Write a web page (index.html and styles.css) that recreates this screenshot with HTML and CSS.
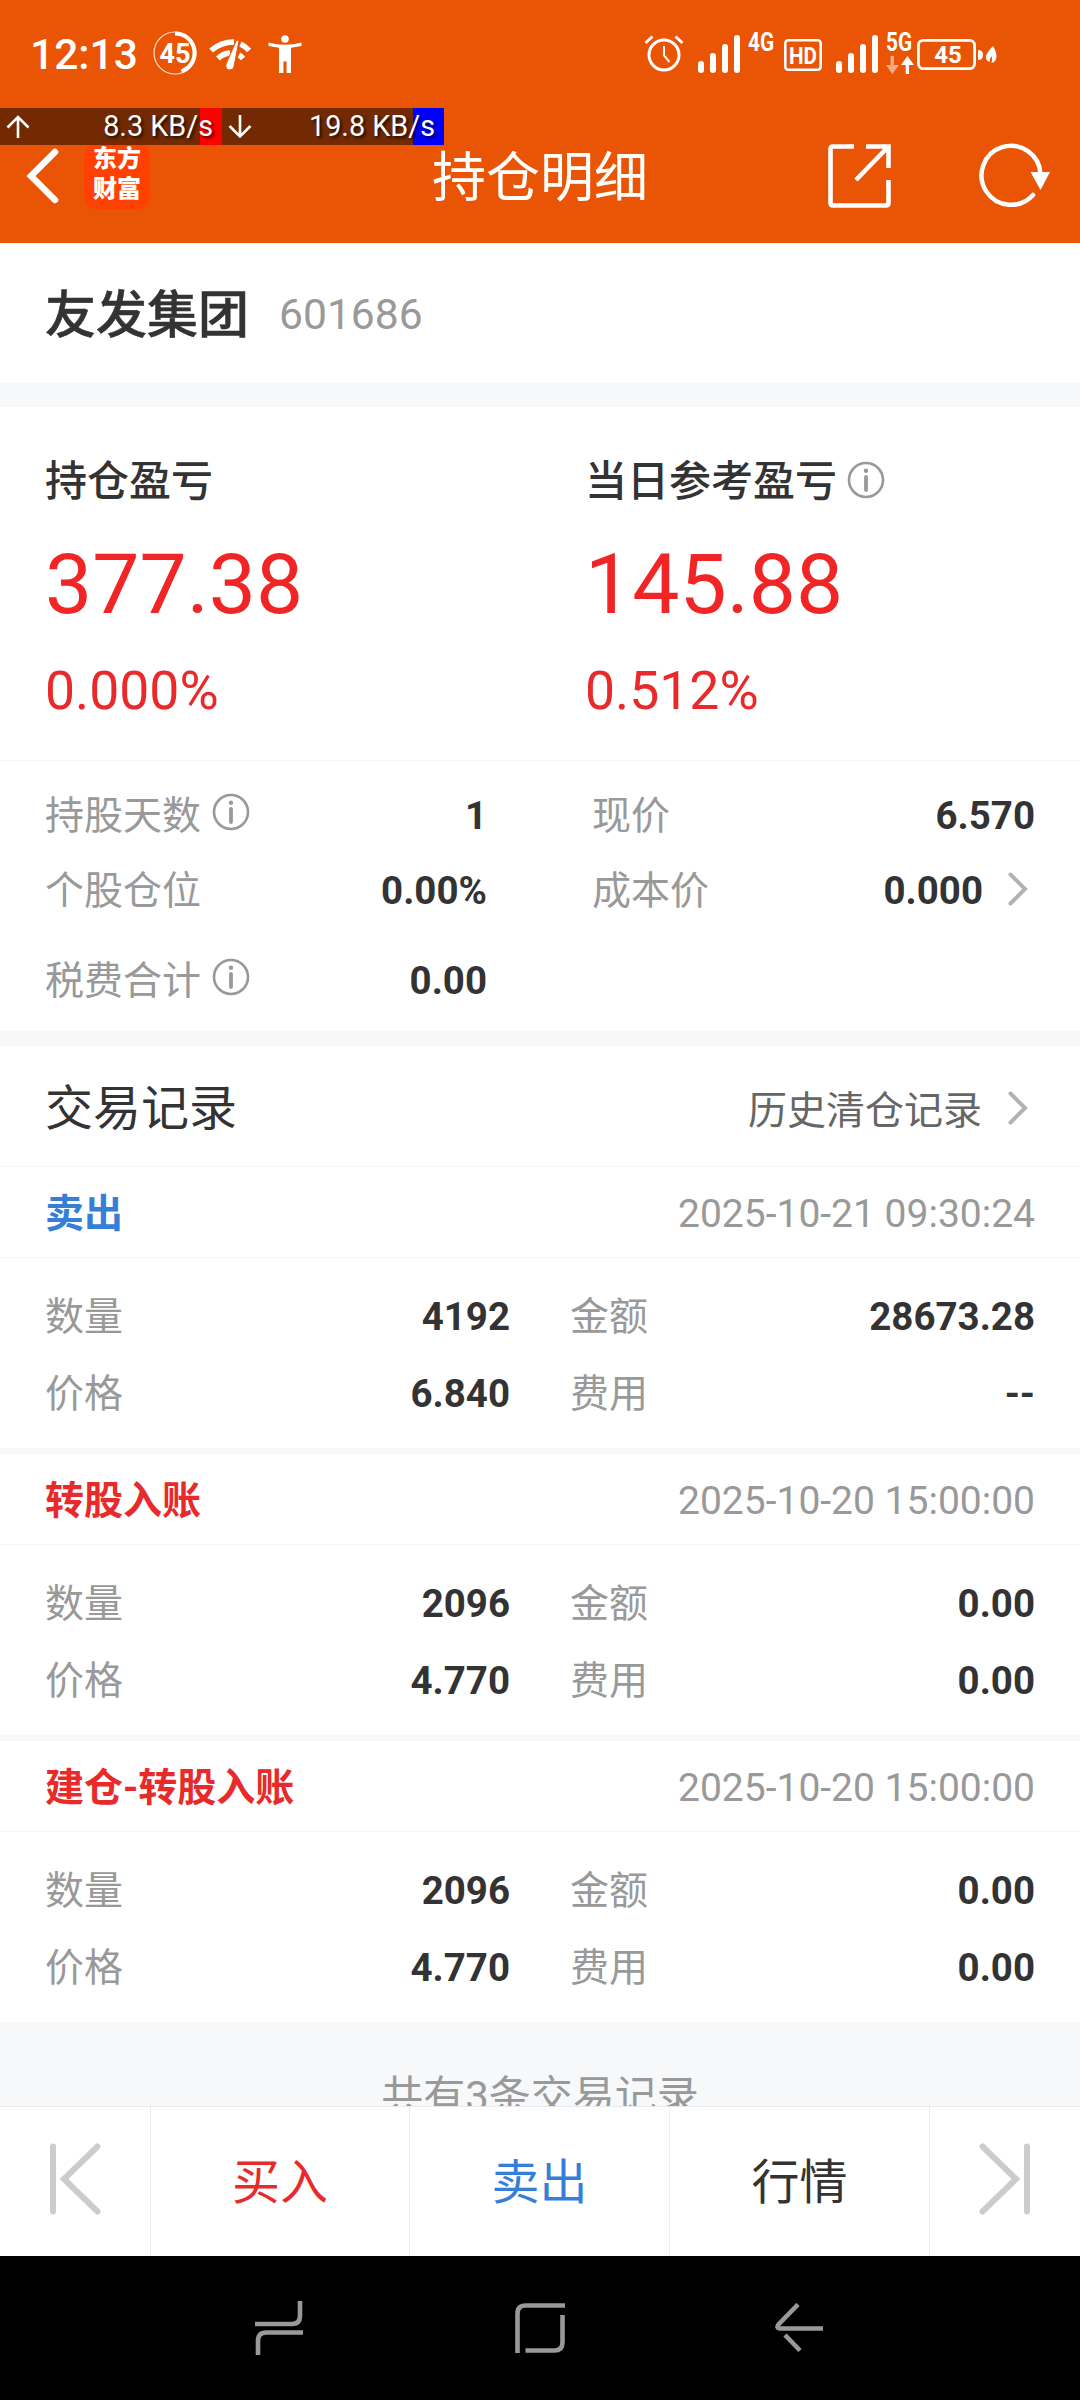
FILE: index.html
```html
<!DOCTYPE html>
<html lang="zh-CN">
<head>
    <meta charset="UTF-8">
    <meta name="viewport" content="width=device-width, initial-scale=1.0">
    <title>持仓明细</title>
    <link rel="stylesheet" href="styles.css">
</head>
<body>
<svg class="defs" width="0" height="0">
    <symbol id="info" viewBox="0 0 38 38">
        <circle cx="19" cy="19" r="17" fill="none" stroke="#999" stroke-width="2.6"/>
        <circle cx="19" cy="9.8" r="2.2" fill="#999"/>
        <path d="M19 16v13" stroke="#999" stroke-width="3.8" stroke-linecap="round"/>
    </symbol>
    <symbol id="chevron" viewBox="0 0 20 34">
        <path d="M2.5 2.5L17 17L2.5 31.5" fill="none" stroke="#b2b2b2" stroke-width="4" stroke-linecap="round"/>
    </symbol>
    <symbol id="signal" viewBox="0 0 42 38">
        <rect x="0" y="26" width="6" height="12" rx="3"/>
        <rect x="12" y="18" width="6" height="20" rx="3"/>
        <rect x="24" y="9" width="6" height="29" rx="3"/>
        <rect x="36" y="0" width="6" height="38" rx="3"/>
    </symbol>
</svg>
<div class="phone">
    <header class="header">
        <div class="status-bar">
            <span class="clock">12:13</span>
            <svg class="ring-icon" width="44" height="44" viewBox="0 0 44 44">
                <circle cx="22" cy="22" r="21" fill="none" stroke="#fff" stroke-opacity=".8" stroke-width="1.2"/>
                <path d="M22 2.5A19.5 19.5 0 0 1 28.5 40.4" fill="none" stroke="#fff" stroke-width="4"/>
                <text x="22" y="31.5" text-anchor="middle">45</text>
            </svg>
            <svg class="wifi-icon" width="42" height="32" viewBox="0 0 42 32">
                <path d="M2 11.5Q12 3 25 3M31.5 5Q36 7 40 11.5" fill="none" stroke="#fff" stroke-width="5.5"/>
                <path d="M9 19.5Q14 14.5 21 14M30 16Q32 17 34 19.5" fill="none" stroke="#fff" stroke-width="5.5"/>
                <path d="M27.5 1L30 1.5L25 27.5Q24.5 31 20.5 31Q16 30.5 17 25Z" fill="#fff" stroke="#e95504" stroke-width="1"/>
            </svg>
            <svg class="person-icon" width="34" height="38" viewBox="0 0 34 38" fill="#fff">
                <circle cx="17" cy="4" r="3.8"/>
                <path d="M.5 7.5Q17 12 33.5 7.5V11L23 12.8V38H18.6V26.5H15.4V38H11V12.8L.5 11Z"/>
            </svg>
            <span class="spacer"></span>
            <svg class="alarm-icon" width="40" height="38" viewBox="0 0 40 38" fill="none" stroke="#fff">
                <circle cx="20" cy="21" r="15" stroke-width="3"/>
                <path d="M20 12V21.5L25.5 28" stroke-width="2"/>
                <path d="M1.5 9L8.5 2.5M31.5 2.5L38.5 9" stroke-width="3"/>
            </svg>
            <svg class="signal" width="42" height="38" fill="#fff"><use href="#signal"/></svg>
            <span class="net-type">4G</span>
            <svg class="hd-icon" width="38" height="32" viewBox="0 0 38 32">
                <rect x="1.3" y="1.3" width="35.4" height="29.4" rx="3" fill="none" stroke="#fff" stroke-width="2.6"/>
                <text x="19" y="24.5" text-anchor="middle" textLength="28" lengthAdjust="spacingAndGlyphs">HD</text>
            </svg>
            <svg class="signal" width="42" height="38" fill="#fff"><use href="#signal"/></svg>
            <div class="net-5g">
                <span class="net-type">5G</span>
                <svg width="28" height="18" viewBox="0 0 28 18" fill="#fff">
                    <path d="M4.5 0H8V9H13L6.3 18L0 9H4.5Z" opacity=".5"/>
                    <path d="M19.7 18H23V9H28L21.5 0L15 9H19.7Z"/>
                </svg>
            </div>
            <svg class="battery" width="80" height="32" viewBox="0 0 80 32">
                <rect x="1.4" y="1.4" width="56.2" height="28.2" rx="5" fill="none" stroke="#fff" stroke-width="2.8"/>
                <path d="M61 11Q66 11 66 16T61 21Z" fill="#fff"/>
                <path d="M76 7Q79.5 13 79.5 17.5Q79 23 74.5 24Q76 20 74.5 17Q72.5 20 72.5 23Q68.5 21.5 69 17Q70.5 12.5 76 7Z" fill="#fff"/>
                <text x="31" y="23.5" text-anchor="middle">45</text>
            </svg>
        </div>
        <div class="title-bar">
            <svg class="back" width="34" height="56" viewBox="0 0 34 56">
                <path d="M29 4L5 28L29 52" fill="none" stroke="#fff" stroke-width="6.5" stroke-linecap="round"/>
            </svg>
            <div class="logo"><span>东方</span><span>财富</span></div>
            <h1>持仓明细</h1>
            <svg class="share" width="64" height="64" viewBox="0 0 64 64">
                <path d="M26 2.5H5Q2.5 2.5 2.5 5V59Q2.5 61.5 5 61.5H58Q60.5 61.5 60.5 59V36M38 2.5H60.5V24M60 3L28 36" fill="none" stroke="#fff" stroke-width="4.6"/>
            </svg>
            <svg class="refresh" width="72" height="66" viewBox="0 0 72 66">
                <path d="M54 53A29.5 29.5 0 1 1 61.5 32" fill="none" stroke="#fff" stroke-width="4.5" stroke-linecap="round"/>
                <path d="M51.5 30H71L61.5 48Z" fill="#fff"/>
            </svg>
        </div>
        <!-- floating network speed overlay -->
        <div class="net-speed">
            <div class="speed up">
                <svg width="24" height="24" viewBox="0 0 24 24"><path d="M12 23V2M1.5 12.5L12 2L22.5 12.5"/></svg>
                <span>8.3 KB/s</span>
            </div>
            <div class="speed down">
                <svg width="24" height="24" viewBox="0 0 24 24"><path d="M12 0V21M1.5 11L12 21.5L22.5 11"/></svg>
                <span>19.8 KB/s</span>
            </div>
        </div>
    </header>

    <main class="content">
        <section class="stock">
            <h2>友发集团</h2>
            <span class="code">601686</span>
        </section>

        <section class="profit">
            <div class="profit-col">
                <div class="profit-label">持仓盈亏</div>
                <div class="amount">377.38</div>
                <div class="percent">0.000%</div>
            </div>
            <div class="profit-col">
                <div class="profit-label">当日参考盈亏<svg class="info"><use href="#info"/></svg></div>
                <div class="amount">145.88</div>
                <div class="percent">0.512%</div>
            </div>
        </section>

        <section class="detail">
            <div class="row"><span>持股天数<svg class="info"><use href="#info"/></svg></span><b>1</b></div>
            <div class="row"><span>现价</span><b>6.570</b></div>
            <div class="row"><span>个股仓位</span><b>0.00%</b></div>
            <div class="row"><span>成本价</span><b>0.000<svg class="chevron"><use href="#chevron"/></svg></b></div>
            <div class="row last"><span>税费合计<svg class="info"><use href="#info"/></svg></span><b>0.00</b></div>
        </section>

        <section class="records-head">
            <h3>交易记录</h3>
            <span class="history">历史清仓记录<svg class="chevron"><use href="#chevron"/></svg></span>
        </section>

        <section class="record">
            <div class="record-head"><strong class="sell">卖出</strong><time>2025-10-21 09:30:24</time></div>
            <div class="record-body">
                <div class="row"><span>数量</span><b>4192</b></div>
                <div class="row"><span>金额</span><b>28673.28</b></div>
                <div class="row"><span>价格</span><b>6.840</b></div>
                <div class="row"><span>费用</span><b>--</b></div>
            </div>
        </section>
        <section class="record">
            <div class="record-head"><strong class="buy">转股入账</strong><time>2025-10-20 15:00:00</time></div>
            <div class="record-body">
                <div class="row"><span>数量</span><b>2096</b></div>
                <div class="row"><span>金额</span><b>0.00</b></div>
                <div class="row"><span>价格</span><b>4.770</b></div>
                <div class="row"><span>费用</span><b>0.00</b></div>
            </div>
        </section>
        <section class="record">
            <div class="record-head"><strong class="buy">建仓-转股入账</strong><time>2025-10-20 15:00:00</time></div>
            <div class="record-body">
                <div class="row"><span>数量</span><b>2096</b></div>
                <div class="row"><span>金额</span><b>0.00</b></div>
                <div class="row"><span>价格</span><b>4.770</b></div>
                <div class="row"><span>费用</span><b>0.00</b></div>
            </div>
        </section>
        <p class="total">共有3条交易记录</p>
    </main>

    <footer class="actions">
        <div class="prev">
            <svg width="52" height="72" viewBox="0 0 52 72"><path d="M4 3.5V68.5M48.5 3.5L15 36L48.5 68.5"/></svg>
        </div>
        <div class="action buy">买入</div>
        <div class="action sell">卖出</div>
        <div class="action">行情</div>
        <div class="next">
            <svg width="52" height="72" viewBox="0 0 52 72"><path d="M48 3.5V68.5M3.5 3.5L37 36L3.5 68.5"/></svg>
        </div>
    </footer>

    <nav class="nav-bar">
        <svg width="48" height="54" viewBox="0 0 48 54"><path d="M45 0V15Q45 23 37 23H0M48 31.500H11Q3 31.500 3 40V54"/></svg>
        <svg width="50" height="50" viewBox="0 0 50 50"><path d="M2.5 50V10.500Q2.500 2.500 10.500 2.500H50M47.500 12V39.500Q47.500 47.500 39.500 47.500H10.500"/></svg>
        <svg class="nav-back" width="48" height="50" viewBox="0 0 48 50"><path d="M48 25.500H4.500Q1 25 3.500 21.500L23 1.500M10 32L25 47.500"/></svg>
    </nav>
</div>
</body>
</html>
```
FILE: styles.css
```css
* {
    box-sizing: border-box;
}
body {
    margin: 0;
    font-family: Roboto, "Noto Sans CJK SC", sans-serif;
    color: #333;
    background: #fff;
}
h1, h2, h3, p {
    margin: 0;
    font-weight: 400;
}
svg {
    display: block;
    flex: none;
}
.defs {
    position: absolute;
}
.phone {
    width: 1080px;
    height: 2400px;
    display: flex;
    flex-direction: column;
    overflow: hidden;
}

/* header */
.header {
    position: relative;
    height: 243px;
    background: #e95504;
    color: #fff;
}
.status-bar {
    display: flex;
    align-items: flex-start;
    height: 108px;
    padding: 31px 83px 0 30px;
}
.status-bar text {
    fill: #fff;
    font-weight: 700;
    font-size: 24px;
}
.clock {
    width: 123px;
    font-size: 42.5px;
    line-height: 48px;
    font-weight: 500;
}
.ring-icon {
    overflow: visible;
}
.status-bar .ring-icon text {
    font-size: 27px;
}
.wifi-icon {
    margin: 8px 0 0 12px;
}
.person-icon {
    margin: 4px 0 0 17px;
}
.spacer {
    flex: 1;
}
.alarm-icon {
    margin-top: 3px;
}
.signal {
    margin: 4px 0 0 14px;
}
.net-type {
    display: block;
    width: 26px;
    margin-left: 8px;
    font-size: 25px;
    line-height: 24px;
    font-weight: 700;
    transform: scaleX(.83);
    transform-origin: 0 0;
}
.hd-icon {
    margin: 8px 0 0 10px;
}
.net-5g {
    width: 39px;
}
.net-5g svg {
    margin: 1px 0 0 8px;
}
.battery {
    margin: 8px 0 0 0;
}
.title-bar {
    display: flex;
    align-items: flex-start;
    height: 135px;
    padding: 35px 0 0 26px;
}
.back {
    margin-top: 5px;
}
.logo {
    display: flex;
    flex-direction: column;
    width: 66px;
    height: 66px;
    margin-left: 24px;
    padding-top: 1px;
    border-radius: 13px;
    background: #ff4000;
    font-size: 24px;
    line-height: 30px;
    font-weight: 900;
    text-align: center;
}
.title-bar h1 {
    width: 216px;
    margin-left: 282px;
    padding-top: 3px;
    font-size: 54px;
    line-height: 66px;
    white-space: nowrap;
}
.share {
    margin: 1px 0 0 180px;
}
.refresh {
    margin: -1px 0 0 87px;
}
.net-speed {
    position: absolute;
    left: 0;
    top: 108px;
    display: flex;
    height: 37px;
}
.speed {
    display: flex;
    align-items: center;
    justify-content: space-between;
    width: 222px;
    padding: 0 9px 0 6px;
    font-size: 28.8px;
    line-height: 37px;
    text-shadow: 2px 2px 3px rgba(0, 0, 0, .7);
}
.speed svg {
    fill: none;
    stroke: #fff;
    stroke-width: 2.6;
}
.up {
    background: linear-gradient(90deg, #732a02 200px, #f00 200px);
}
.down {
    background: linear-gradient(90deg, #732a02 191px, #00f 191px);
}

/* content */
.content {
    height: 1863px;
    overflow: hidden;
    background: #f6f8fa;
}
.stock, .profit, .detail, .records-head, .record {
    background: #fff;
}
.stock {
    display: flex;
    align-items: center;
    height: 140px;
    padding-left: 45px;
}
.stock h2 {
    padding-bottom: 5px;
    font-size: 51px;
    font-weight: 500;
    -webkit-text-stroke: .5px #333;
}
.code {
    margin: 1px 0 0 30px;
    font-size: 42.6px;
    color: #999;
}
.profit {
    display: flex;
    height: 354px;
    margin-top: 24px;
    border-bottom: 1px solid #f4f5f7;
}
.profit-col {
    width: 541px;
    padding: 45px 0 0 45px;
}
.profit-label {
    display: flex;
    align-items: center;
    font-size: 42px;
    line-height: 60px;
    font-weight: 500;
}
.info {
    width: 38px;
    height: 38px;
    margin-left: 11px;
}
.profit-label .info {
    margin: -4px 0 0 10px;
}
.amount {
    margin-top: 24px;
    font-size: 84px;
    line-height: 98px;
    color: #f12525;
}
.percent {
    margin-top: 25px;
    font-size: 53.5px;
    line-height: 64px;
    color: #e82a2a;
}
.row {
    display: flex;
    align-items: center;
    justify-content: space-between;
    font-size: 39px;
}
.row span {
    display: flex;
    align-items: center;
    padding-bottom: 5px;
    color: #999;
}
.row b {
    display: flex;
    align-items: center;
    padding-top: 2px;
    font-size: 38.5px;
    font-weight: 700;
}
.detail {
    display: grid;
    grid-template-columns: 442px 443px;
    column-gap: 105px;
    grid-template-rows: 75px 75px 105px;
    height: 270px;
    padding: 16px 45px 0;
}
.chevron {
    width: 20px;
    height: 34px;
    margin: 0 7px 0 25px;
}
.row .chevron {
    margin-top: -4px;
}
.records-head {
    display: flex;
    align-items: center;
    justify-content: space-between;
    height: 121px;
    margin-top: 15px;
    padding: 0 45px;
    border-bottom: 1px solid #f4f5f7;
}
.records-head h3 {
    padding-bottom: 5px;
    font-size: 48px;
}
.history {
    display: flex;
    align-items: center;
    padding-top: 1px;
    font-size: 39px;
    color: #666;
}
.history .chevron {
    margin: 3px 7px 0 26px;
}
.record {
    height: 281px;
    margin-bottom: 6px;
}
.record-head {
    display: flex;
    align-items: center;
    justify-content: space-between;
    height: 91px;
    padding: 0 45px;
    border-bottom: 1px solid #f4f5f7;
    font-size: 39px;
}
.record-head strong {
    padding-bottom: 4px;
    font-weight: 700;
}
.record-head time {
    padding-top: 3px;
    color: #999;
}
.record-body {
    display: grid;
    grid-template-columns: 465px 465px;
    column-gap: 60px;
    grid-template-rows: 77px 77px;
    padding: 19px 45px 0;
}
.buy {
    color: #e82a2a;
}
.sell {
    color: #357fd9;
}
.total {
    margin-top: 44px;
    font-size: 42px;
    line-height: 62px;
    text-align: center;
    color: #999;
}

/* bottom bars */
.actions {
    display: grid;
    grid-template-columns: 150px 260px 260px 260px 150px;
    height: 150px;
    border-top: 1px solid #e9eaec;
    background: #fff;
}
.action {
    padding-top: 2px;
    border-right: 1px solid #ececec;
    font-size: 48px;
    line-height: 147px;
    text-align: center;
}
.action.buy {
    border-left: 1px solid #ececec;
}
.prev, .next {
    display: flex;
    justify-content: center;
    padding-top: 36px;
}
.actions path {
    fill: none;
    stroke: #ccc;
    stroke-width: 6;
    stroke-linecap: round;
}
.nav-bar {
    display: flex;
    align-items: center;
    justify-content: center;
    gap: 212px;
    height: 144px;
    background: #000;
}
.nav-back {
    margin: 0 2px 0 -2px;
}
.nav-bar path {
    fill: none;
    stroke: #999;
    stroke-width: 4.6;
}
```
